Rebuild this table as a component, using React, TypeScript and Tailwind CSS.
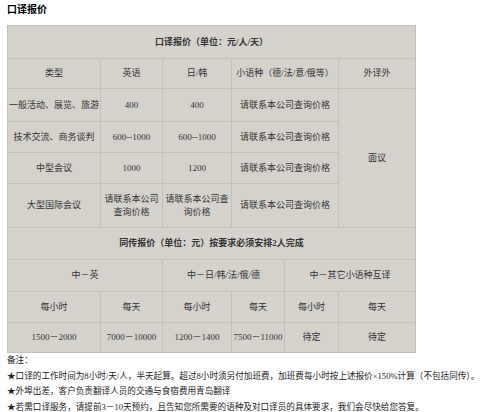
import React from "react";

const cell = "border border-[#c3c0ba] text-center align-middle p-0 text-[#333]";

export default function App() {
  return (
    <div
      className="w-[500px] h-[412px] bg-white overflow-hidden text-[9px] leading-[11px] text-[#222]"
      style={{ fontFamily: '"Liberation Serif", "Noto Sans CJK SC", sans-serif' }}
    >
      <div className="h-[25px] pl-[7px] pt-[4px] text-[10px] leading-[12px] font-bold text-black">口译报价</div>
      <table className="ml-[7px] table-fixed border-collapse bg-[#d5d2cc] w-[408px]">
        <colgroup>
          <col className="w-[93px]" />
          <col className="w-[62px]" />
          <col className="w-[69px]" />
          <col className="w-[53px]" />
          <col className="w-[54px]" />
          <col className="w-[77px]" />
        </colgroup>
        <tbody>
          <tr className="h-[33px]">
            <td colSpan={6} className={cell + " font-bold text-[#222]"}>口译报价（单位：元/人/天）</td>
          </tr>
          <tr className="h-[30px]">
            <td className={cell}>类型</td>
            <td className={cell}>英语</td>
            <td className={cell}>日/韩</td>
            <td colSpan={2} className={cell}>小语种（德/法/意/俄等）</td>
            <td className={cell}>外译外</td>
          </tr>
          <tr className="h-[33px]">
            <td className={cell}>一般活动、展览、旅游</td>
            <td className={cell}>400</td>
            <td className={cell}>400</td>
            <td colSpan={2} className={cell}>请联系本公司查询价格</td>
            <td rowSpan={4} className={cell}>面议</td>
          </tr>
          <tr className="h-[31px]">
            <td className={cell}>技术交流、商务谈判</td>
            <td className={cell}>600--1000</td>
            <td className={cell}>600--1000</td>
            <td colSpan={2} className={cell}>请联系本公司查询价格</td>
          </tr>
          <tr className="h-[31px]">
            <td className={cell}>中型会议</td>
            <td className={cell}>1000</td>
            <td className={cell}>1200</td>
            <td colSpan={2} className={cell}>请联系本公司查询价格</td>
          </tr>
          <tr className="h-[44px]">
            <td className={cell}>大型国际会议</td>
            <td className={cell + " leading-[13px]"}>请联系本公司<br />查询价格</td>
            <td className={cell + " leading-[13px]"}>请联系本公司查<br />询价格</td>
            <td colSpan={2} className={cell}>请联系本公司查询价格</td>
          </tr>
          <tr className="h-[32px]">
            <td colSpan={6} className={cell + " font-bold text-[#222]"}>同传报价（单位：元）按要求必须安排2人完成</td>
          </tr>
          <tr className="h-[32px]">
            <td colSpan={2} className={cell}>中－英</td>
            <td colSpan={2} className={cell}>中－日/韩/法/俄/德</td>
            <td colSpan={2} className={cell}>中－其它小语种互译</td>
          </tr>
          <tr className="h-[31px]">
            <td className={cell}>每小时</td>
            <td className={cell}>每天</td>
            <td className={cell}>每小时</td>
            <td className={cell}>每天</td>
            <td className={cell}>每小时</td>
            <td className={cell}>每天</td>
          </tr>
          <tr className="h-[30px]">
            <td className={cell}>1500－2000</td>
            <td className={cell}>7000－10000</td>
            <td className={cell}>1200－1400</td>
            <td className={cell}>7500－11000</td>
            <td className={cell}>待定</td>
            <td className={cell}>待定</td>
          </tr>
        </tbody>
      </table>
      <div className="pl-[7px] text-[8.6px] leading-[15.5px] text-[#222] whitespace-nowrap">
        <div>备注：</div>
        <div>★口译的工作时间为8小时/天/人，半天起算。超过8小时须另付加班费，加班费每小时按上述报价×150%计算（不包括同传）。</div>
        <div>★外埠出差，客户负责翻译人员的交通与食宿费用青岛翻译</div>
        <div>★若需口译服务，请提前3－10天预约，且告知您所需要的语种及对口译员的具体要求，我们会尽快给您答复。</div>
      </div>
    </div>
  );
}
